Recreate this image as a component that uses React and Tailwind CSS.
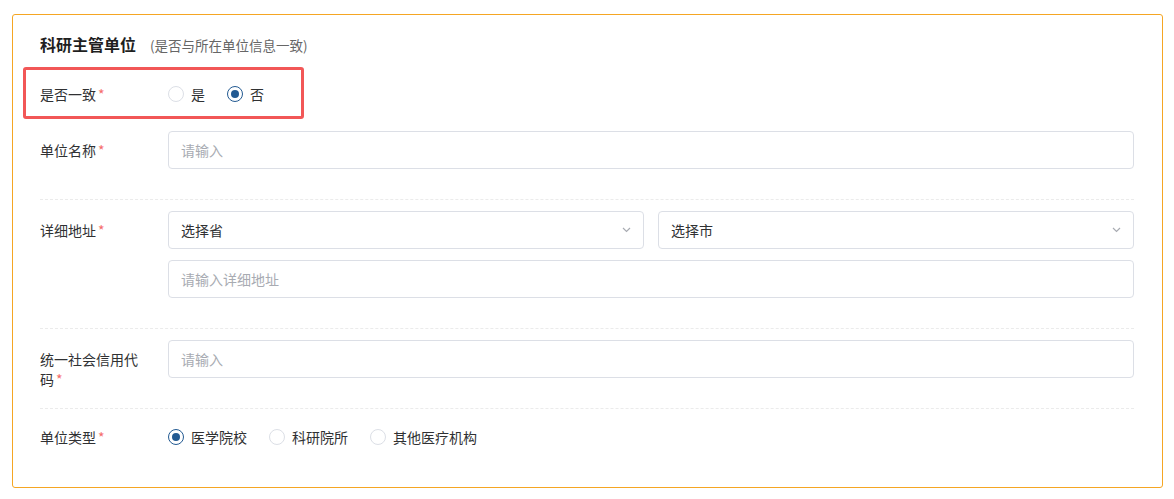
import React from 'react';

const font = { fontFamily: '"Noto Sans CJK SC", "Noto Sans", sans-serif' };

const Label = ({ children }) => (
  <div className="h-[38px] w-[128px] shrink-0 pr-[20px] pt-[9px] text-[14px] leading-[20px] text-[#303133]">
    {children}
    <span className="ml-[2px] text-[#f56c6c]">*</span>
  </div>
);

const Input = ({ placeholder }) => (
  <div className="flex h-[38px] flex-1 shrink-0 items-center rounded-[4px] border border-[#dcdfe6] bg-white px-[12px] text-[14px] text-[#a8abb2]">
    {placeholder}
  </div>
);

const Select = ({ value }) => (
  <div className="flex h-[38px] flex-1 items-center justify-between rounded-[4px] border border-[#dcdfe6] bg-white pl-[12px] pr-[12px] text-[14px] text-[#303133]">
    <span>{value}</span>
    <svg width="9" height="6" viewBox="0 0 9 6" fill="none">
      <path d="M1 1l3.5 3.5L8 1" stroke="#a8abb2" strokeWidth="1.2" />
    </svg>
  </div>
);

const Radio = ({ label, checked }) => (
  <div className="mr-[22px] flex items-center">
    {checked ? (
      <span className="flex h-[16px] w-[16px] items-center justify-center rounded-full border border-[#235a92]">
        <span className="h-[8px] w-[8px] rounded-full bg-[#235a92]" />
      </span>
    ) : (
      <span className="h-[16px] w-[16px] rounded-full border border-[#dcdfe6]" />
    )}
    <span className="ml-[7px] text-[14px] leading-[20px] text-[#303133]">{label}</span>
  </div>
);

const App = () => {
  return (
    <div className="min-h-[499px] bg-white pl-[12px] pt-[14px]" style={font}>
      <div className="relative h-[474px] w-[1151px] rounded-[3px] border border-[#f5a623] pl-[27px] pr-[28px] pt-[17px]">
        <div className="flex items-baseline">
          <span className="text-[16px] font-bold leading-[24px] text-[#1f1f1f]">科研主管单位</span>
          <span className="ml-[14px] text-[13.5px] text-[#666]">(是否与所在单位信息一致)</span>
        </div>

        <div className="pointer-events-none absolute left-[10px] top-[52px] h-[52px] w-[281px] rounded-[3px] border-[3px] border-[#f25757]" />

        <div className="mt-[18px] flex h-[40px] items-center">
          <div className="w-[128px] shrink-0 text-[14px] leading-[20px] text-[#303133]">
            是否一致<span className="ml-[2px] text-[#f56c6c]">*</span>
          </div>
          <div className="flex">
            <Radio label="是" />
            <Radio label="否" checked />
          </div>
        </div>

        <div className="mt-[17px] flex border-b border-dashed border-[#ebebeb] pb-[30px]">
          <Label>单位名称</Label>
          <Input placeholder="请输入" />
        </div>

        <div className="flex border-b border-dashed border-[#ebebeb] pb-[30px] pt-[11px]">
          <Label>详细地址</Label>
          <div className="flex flex-1 flex-col gap-[11px]">
            <div className="flex gap-[14px]">
              <Select value="选择省" />
              <Select value="选择市" />
            </div>
            <div className="flex">
              <Input placeholder="请输入详细地址" />
            </div>
          </div>
        </div>

        <div className="flex border-b border-dashed border-[#ebebeb] pb-[30px] pt-[11px]">
          <Label>统一社会信用代码</Label>
          <Input placeholder="请输入" />
        </div>

        <div className="mt-[18px] flex h-[20px] items-center">
          <div className="w-[128px] shrink-0 text-[14px] leading-[20px] text-[#303133]">
            单位类型<span className="ml-[2px] text-[#f56c6c]">*</span>
          </div>
          <div className="flex">
            <Radio label="医学院校" checked />
            <Radio label="科研院所" />
            <Radio label="其他医疗机构" />
          </div>
        </div>
      </div>
    </div>
  );
};

export default App;
